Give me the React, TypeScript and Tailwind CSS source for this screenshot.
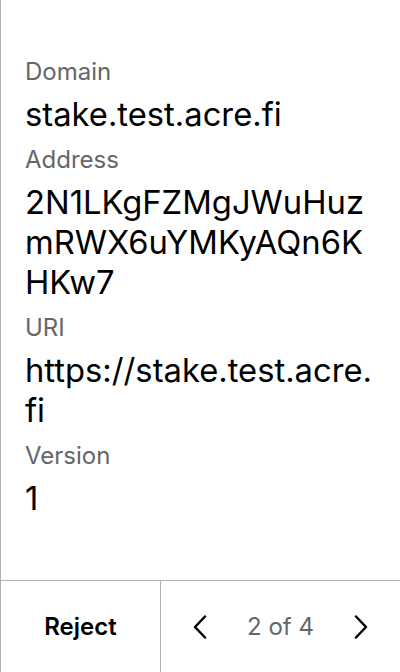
const fields = [
  { label: "Domain", value: "stake.test.acre.fi" },
  { label: "Address", value: "2N1LKgFZMgJWuHuzmRWX6uYMKyAQn6KHKw7" },
  { label: "URI", value: "https://stake.test.acre.fi" },
  { label: "Version", value: "1" },
];

function Chevron({ dir }: { dir: "left" | "right" }) {
  return (
    <svg width="14" height="24" viewBox="0 0 14 24" fill="none">
      <polyline
        points={dir === "left" ? "12,1.5 2,12 12,22.5" : "2,1.5 12,12 2,22.5"}
        stroke="#000"
        strokeWidth="2.5"
        strokeLinecap="round"
        strokeLinejoin="round"
      />
    </svg>
  );
}

export default function App() {
  return (
    <div
      className="h-[672px] w-[400px] flex flex-col bg-white border-l border-[#b0b0b0] text-black"
      style={{ fontFamily: "Inter, 'Noto Sans', sans-serif" }}
    >
      <div className="flex-1 px-6 pt-[56px] flex flex-col gap-[10px]">
        {fields.map((f) => (
          <div key={f.label} className="flex flex-col gap-[6px]">
            <p className="text-[24px] leading-[32px] text-[#666]">{f.label}</p>
            <p className="text-[32.75px] leading-[40px] [overflow-wrap:anywhere]">
              {f.value}
            </p>
          </div>
        ))}
      </div>
      <div className="h-[92px] border-t border-[#b0b0b0] grid grid-cols-[160px_1fr]">
        <button className="flex items-center justify-center border-r border-[#b0b0b0] text-[24px] font-semibold">
          Reject
        </button>
        <div className="flex items-center justify-between px-[32px]">
          <Chevron dir="left" />
          <span className="text-[24px] text-[#666]">2 of 4</span>
          <Chevron dir="right" />
        </div>
      </div>
    </div>
  );
}
